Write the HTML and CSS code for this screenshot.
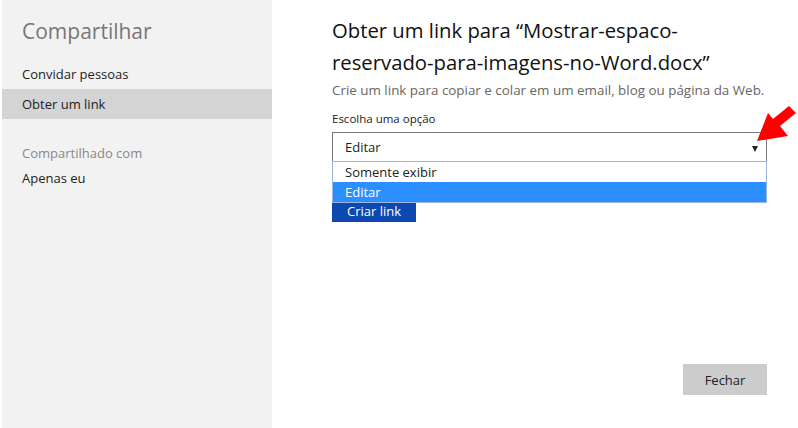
FILE: index.html
```html
<!DOCTYPE html>
<html lang="pt">
<head>
  <meta charset="UTF-8">
  <title>Compartilhar</title>
  <link rel="stylesheet" href="styles.css">
</head>
<body>
  <div class="dialog">
    <div class="sidebar">
      <h1>Compartilhar</h1>
      <a class="nav-item">Convidar pessoas</a>
      <a class="nav-item active">Obter um link</a>
      <p class="section">Compartilhado com</p>
      <p class="who">Apenas eu</p>
    </div>
    <div class="main">
      <h2>Obter um link para “Mostrar-espaco-reservado-para-imagens-no-Word.docx”</h2>
      <p class="desc">Crie um link para copiar e colar em um email, blog ou página da Web.</p>
      <label class="label">Escolha uma opção</label>
      <div class="select-wrap">
        <div class="select">
          <span>Editar</span>
          <span class="caret"></span>
        </div>
        <ul class="options">
          <li>Somente exibir</li>
          <li class="hover">Editar</li>
        </ul>
        <svg class="arrow" width="48" height="44" viewBox="0 0 48 44">
          <polygon points="7,40 18,12 23,18 39,5 46,12 30,25 38,35" fill="#ff0000"/>
        </svg>
      </div>
      <button class="create">Criar link</button>
      <div class="footer">
        <button class="close">Fechar</button>
      </div>
    </div>
  </div>
</body>
</html>
```

FILE: styles.css
```css
body {
  margin: 0;
  font-family: "Open Sans", "Noto Sans", sans-serif;
  background: #fff;
}
.dialog {
  display: flex;
  height: 428px;
}
.sidebar {
  width: 270px;
  margin-left: 2px;
  background: #f2f2f2;
}
.sidebar h1 {
  font-size: 21px;
  font-weight: normal;
  color: #777;
  margin: 17px 0 14px 20px;
}
.nav-item {
  display: block;
  font-size: 13px;
  color: #222;
  padding: 0 20px;
  height: 30px;
  line-height: 30px;
}
.nav-item.active {
  background: #d4d4d4;
}
.section {
  font-size: 13px;
  color: #888;
  margin: 25px 0 0 20px;
}
.who {
  font-size: 13px;
  color: #222;
  margin: 7px 0 0 20px;
}
.main {
  flex: 1;
  padding: 14px 31px 0 60px;
  display: flex;
  flex-direction: column;
}
.main h2 {
  font-size: 20.3px;
  font-weight: normal;
  line-height: 32px;
  color: #111;
  margin: 0;
  width: 400px;
}
.desc {
  font-size: 13.4px;
  color: #666;
  margin: 3px 0 0;
  white-space: nowrap;
}
.label {
  font-size: 11.5px;
  color: #222;
  margin-top: 12px;
}
.select-wrap {
  position: relative;
  margin-top: 6px;
}
.select {
  height: 28px;
  border: 1px solid #7a7a7a;
  display: flex;
  align-items: center;
  justify-content: space-between;
  padding: 0 8px 0 12px;
  font-size: 13px;
  color: #222;
}
.caret {
  width: 0;
  height: 0;
  border-left: 3px solid transparent;
  border-right: 3px solid transparent;
  border-top: 6px solid #222;
  margin-top: 4px;
}
.options {
  position: absolute;
  top: 29px;
  left: 0;
  right: 0;
  margin: 0;
  padding: 0;
  list-style: none;
  background: #fff;
  border: 1px solid #9ab6de;
  z-index: 2;
}
.options li {
  height: 20px;
  line-height: 20px;
  padding: 0 12px;
  font-size: 13px;
  color: #222;
}
.options li.hover {
  background: #2b8fff;
  color: #fff;
}
.arrow {
  position: absolute;
  right: -31px;
  top: -31px;
  z-index: 3;
}
.create {
  align-self: flex-start;
  margin-top: 32px;
  width: 84px;
  height: 28px;
  border: none;
  background: #0c48b0;
  color: #fff;
  font-family: inherit;
  font-size: 13px;
  padding: 6px 0 0;
}
.footer {
  margin-top: auto;
  margin-bottom: 33px;
  display: flex;
  justify-content: flex-end;
}
.close {
  width: 84px;
  height: 31px;
  border: none;
  background: #cccccc;
  color: #222;
  font-family: inherit;
  font-size: 13px;
}
```
